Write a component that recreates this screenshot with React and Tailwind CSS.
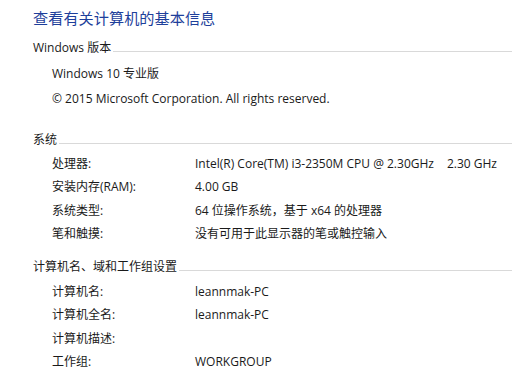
import React from 'react';

function Heading({ children, className = '' }) {
  return (
    <div className={`flex items-center h-[24px] leading-[24px] ${className}`}>
      <span>{children}</span>
      <div className="flex-1 h-px bg-[#d9d9d9] ml-[2px] mt-[6px]" />
    </div>
  );
}

function Row({ label, value, className = '' }) {
  return (
    <div className={`flex h-[23.3px] leading-[23.3px] pl-[19px] whitespace-nowrap ${className}`}>
      <span className="w-[143px] shrink-0">{label}</span>
      <span>{value}</span>
    </div>
  );
}

export default function App() {
  return (
    <div
      className="w-[512px] h-[377px] overflow-hidden bg-white text-[#1a1a1a] text-[12px] pl-[33px]"
      style={{ fontFamily: '"Open Sans", "Noto Sans CJK SC", sans-serif' }}
    >
      <div className="h-[36px] leading-[36px] text-[15.2px] text-[#1e3f9b]">查看有关计算机的基本信息</div>

      <Heading>Windows 版本</Heading>
      <div className="pl-[19px] mt-[2px] h-[24px] leading-[24px]">Windows 10 专业版</div>
      <div className="pl-[19px] mt-[1px] h-[24px] leading-[24px]">© 2015 Microsoft Corporation. All rights reserved.</div>

      <Heading className="mt-[17px]">系统</Heading>
      <Row label="处理器:" value={<span>Intel(R) Core(TM) i3-2350M CPU @ 2.30GHz<span className="ml-[13px]">2.30 GHz</span></span>} />
      <Row label="安装内存(RAM):" value="4.00 GB" />
      <Row label="系统类型:" value="64 位操作系统，基于 x64 的处理器" />
      <Row label="笔和触摸:" value="没有可用于此显示器的笔或触控输入" />

      <Heading className="mt-[10px]">计算机名、域和工作组设置</Heading>
      <Row className="mt-[1px]" label="计算机名:" value="leannmak-PC" />
      <Row label="计算机全名:" value="leannmak-PC" />
      <Row label="计算机描述:" value="" />
      <Row label="工作组:" value="WORKGROUP" />
    </div>
  );
}
